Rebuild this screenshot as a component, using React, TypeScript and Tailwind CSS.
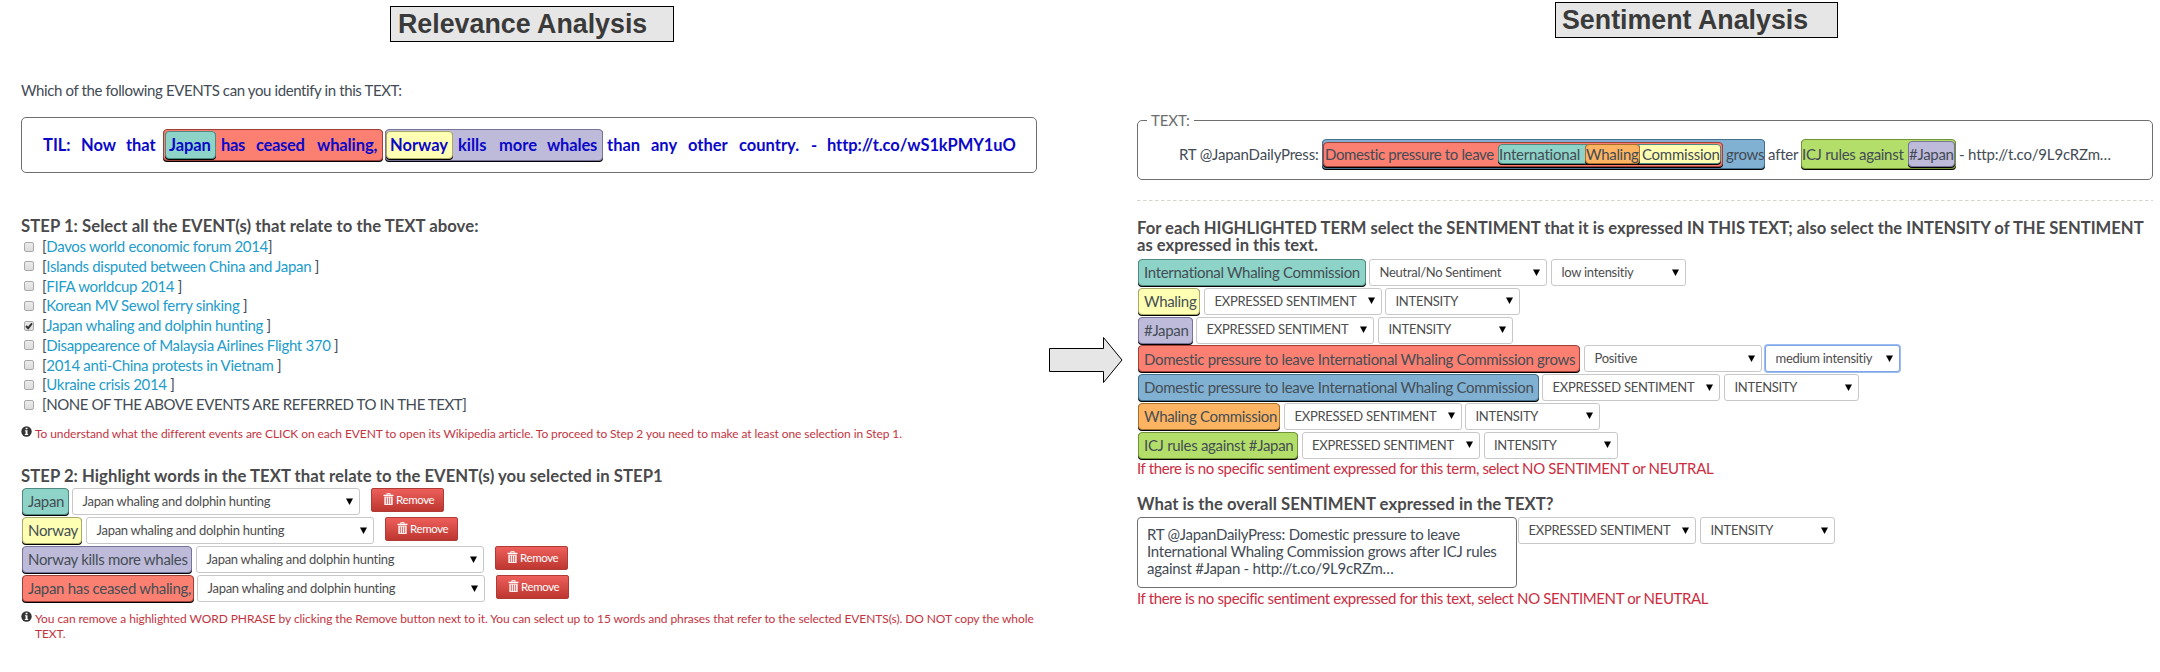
import React from "react";
import clsx from "clsx";

const BODY = "text-[15px] text-[#434b55]";
const HEAD = "font-bold text-[#4a4a4c] whitespace-nowrap";

const TONES = {
  teal: "bg-[#8dd3c7] border-[#4f8a80]",
  yellow: "bg-[#ffffb3] border-[#a9a96a]",
  purple: "bg-[#bebada] border-[#77749a]",
  red: "bg-[#fb8072] border-[#9c4038]",
  blue: "bg-[#80b1d3] border-[#45718f]",
  orange: "bg-[#fdb462] border-[#a66f2b]",
  green: "bg-[#b3de69] border-[#719438]",
};
type Tone = keyof typeof TONES;

function Mark({ tone, className, children }: { tone: Tone; className: string; children: React.ReactNode }) {
  return (
    <span className={clsx("flex shrink-0 items-center whitespace-pre rounded-[4px] border shadow-[0_1px_0_#000]", TONES[tone], className)}>
      {children}
    </span>
  );
}

function Pill({ tone, text, width }: { tone: Tone; text: string; width: string }) {
  return (
    <Mark tone={tone} className={clsx("h-[27px] pl-[5px] text-[15px] text-[#454e55] tracking-[-0.31px]", width)}>
      {text}
    </Mark>
  );
}

function Select({ text, width, focused }: { text: string; width: string; focused?: boolean }) {
  return (
    <span
      className={clsx(
        "flex h-[27px] shrink-0 items-center justify-between whitespace-nowrap rounded-[3px] border bg-white pl-[9.5px] pr-[6px] text-[13px] tracking-[-0.28px] text-[#4d4d4d]",
        focused ? "-ml-px border-[#7ea6e6] ring-1 ring-[#9dbcf0]" : "border-[#c8c8c8]",
        width
      )}
    >
      {text}
      <svg width="7" height="7" viewBox="0 0 7 7" className="-mt-px">
        <path d="M0 0.5H7L3.5 7Z" fill="#000" />
      </svg>
    </span>
  );
}

function InfoIcon() {
  return (
    <svg width="11" height="11" viewBox="0 0 11 11" className="shrink-0">
      <circle cx="5.5" cy="5.5" r="5.2" fill="#333" />
      <path d="M4.6 1.7h1.9v1.5H4.6zM3.9 4.3h2.6v3.6h.7v1H3.8v-1h.8V5.3h-.7z" fill="#fff" />
    </svg>
  );
}

function RemoveButton() {
  return (
    <span className="flex h-[24px] w-[73px] shrink-0 items-center rounded-[2px] border border-[#b03a35] bg-linear-to-b from-[#ee5f5b] to-[#bd362f] pl-[11px] text-[11.5px] tracking-[-0.38px] text-white">
      <svg width="11" height="12" viewBox="0 0 11 12" className="-mt-[2px] mr-[2px]">
        <path d="M3.8 2V0.7H7.2V2" fill="none" stroke="#fff" strokeWidth="1" />
        <path d="M0.5 2.4H10.5" stroke="#fff" strokeWidth="1.3" />
        <path d="M1.3 3.6H9.7V12H1.3Z" fill="#fff" fillOpacity="0.9" />
        <path d="M3.4 4.6V11M5.5 4.6V11M7.6 4.6V11" stroke="#d9534f" strokeWidth="0.8" />
      </svg>
      Remove
    </span>
  );
}

function Title({ text, className }: { text: string; className: string }) {
  return (
    <div
      className={clsx(
        "flex h-[36px] shrink-0 items-center whitespace-nowrap border border-black bg-[#e6e6e6] font-['Liberation_Sans',sans-serif] text-[26.8px] font-bold leading-[34px] text-[#3a3a3a]",
        className
      )}
    >
      {text}
    </div>
  );
}

const EVENTS: { name: string; end: string; checked?: boolean; plain?: boolean }[] = [
  { name: "Davos world economic forum 2014", end: "]" },
  { name: "Islands disputed between China and Japan", end: " ]" },
  { name: "FIFA worldcup 2014", end: " ]" },
  { name: "Korean MV Sewol ferry sinking", end: " ]" },
  { name: "Japan whaling and dolphin hunting", end: " ]", checked: true },
  { name: "Disappearence of Malaysia Airlines Flight 370", end: " ]" },
  { name: "2014 anti-China protests in Vietnam", end: " ]" },
  { name: "Ukraine crisis 2014", end: " ]" },
  { name: "NONE OF THE ABOVE EVENTS ARE REFERRED TO IN THE TEXT", end: "]", plain: true },
];

const PHRASES: { text: string; tone: Tone; slot: string; width: string }[] = [
  { text: "Japan", tone: "teal", slot: "w-[50px]", width: "w-[47px]" },
  { text: "Norway", tone: "yellow", slot: "w-[64px]", width: "w-[60px]" },
  { text: "Norway kills more whales", tone: "purple", slot: "w-[174px]", width: "w-[170px]" },
  { text: "Japan has ceased whaling,", tone: "red", slot: "w-[175px]", width: "w-[172px]" },
];

const TERMS: {
  text: string; tone: Tone; slot: string; width: string;
  sentiment: string; intensity: string; gap: string; focused?: boolean;
}[] = [
  { text: "International Whaling Commission", tone: "teal", slot: "w-[231px]", width: "w-[228px]", sentiment: "Neutral/No Sentiment", intensity: "low intensitiy", gap: "gap-[4px]" },
  { text: "Whaling", tone: "yellow", slot: "w-[66px]", width: "w-[62px]", sentiment: "EXPRESSED SENTIMENT", intensity: "INTENSITY", gap: "gap-[3px]" },
  { text: "#Japan", tone: "purple", slot: "w-[58px]", width: "w-[55px]", sentiment: "EXPRESSED SENTIMENT", intensity: "INTENSITY", gap: "gap-[4px]" },
  { text: "Domestic pressure to leave International Whaling Commission grows", tone: "red", slot: "w-[446px]", width: "w-[442px]", sentiment: "Positive", intensity: "medium intensitiy", gap: "gap-[4px]", focused: true },
  { text: "Domestic pressure to leave International Whaling Commission", tone: "blue", slot: "w-[404px]", width: "w-[401px]", sentiment: "EXPRESSED SENTIMENT", intensity: "INTENSITY", gap: "gap-[4px]" },
  { text: "Whaling Commission", tone: "orange", slot: "w-[146px]", width: "w-[142px]", sentiment: "EXPRESSED SENTIMENT", intensity: "INTENSITY", gap: "gap-[3px]" },
  { text: "ICJ rules against #Japan", tone: "green", slot: "w-[163.5px]", width: "w-[160px]", sentiment: "EXPRESSED SENTIMENT", intensity: "INTENSITY", gap: "gap-[4px]" },
];

function Relevance() {
  return (
    <section className="flex w-[1037px] shrink-0 flex-col pl-[21px] pt-[6px]">
      <Title text="Relevance Analysis" className="ml-[369px] w-[284px] pl-[7px]" />
      <p className={clsx(BODY, "mt-[38px] h-[20px] leading-[20px] tracking-[-0.39px]")}>
        Which of the following EVENTS can you identify in this TEXT:
      </p>
      <div className="mt-[17px] flex h-[56px] items-center rounded-[5px] border border-[#6f6f6f] pl-[21px] text-[16.5px] font-bold text-[#0b08c8]">
        <span className="w-[38px]">TIL:</span>
        <span className="w-[45px]">Now</span>
        <span className="w-[37px] tracking-[-0.1px]">that</span>
        <Mark tone="red" className="h-[32px] w-[220px] pl-px">
          <Mark tone="teal" className="h-[28px] w-[51px] pl-[3px] tracking-[-0.1px]">Japan</Mark>
          <span className="ml-[5px] w-[35px] shrink-0 tracking-[-0.3px]">has</span>
          <span className="w-[61px] shrink-0 tracking-[-0.3px]">ceased</span>
          <span className="tracking-[-0.1px]">whaling,</span>
        </Mark>
        <Mark tone="purple" className="ml-[2px] h-[32px] w-[218px]">
          <Mark tone="yellow" className="h-[28px] w-[67px] pl-[3px]">Norway</Mark>
          <span className="ml-[5px] w-[41px] shrink-0">kills</span>
          <span className="w-[48px] shrink-0">more</span>
          <span className="tracking-[-0.15px]">whales</span>
        </Mark>
        <span className="ml-[4px] w-[44px]">than</span>
        <span className="w-[37px]">any</span>
        <span className="w-[51px]">other</span>
        <span className="w-[72px]">country.</span>
        <span className="w-[16px]">-</span>
        <span className="tracking-[-0.09px]">http://t.co/wS1kPMY1uO</span>
      </div>

      <h2 className={clsx(HEAD, "mt-[43px] h-[20px] text-[16.7px] leading-[20px] tracking-[0.04px]")}>
        STEP 1: Select all the EVENT(s) that relate to the TEXT above:
      </h2>
      <ul className="mt-[0.8px]">
        {EVENTS.map((e) => (
          <li key={e.name} className={clsx(BODY, "flex h-[19.75px] items-center whitespace-pre leading-[19px]")}>
            <span className="ml-[3px] mr-[8px] flex size-[10px] items-center justify-center rounded-[2px] border border-[#a9a9a9] bg-linear-to-b from-[#ececec] to-[#dcdcdc]">
              {e.checked && (
                <svg width="8" height="8" viewBox="0 0 8 8">
                  <path d="M1 4L3.1 6.2L7 1.3" fill="none" stroke="#333" strokeWidth="1.9" />
                </svg>
              )}
            </span>
            <span className={clsx(e.plain ? "tracking-[-0.42px]" : "tracking-[-0.32px]")}>
              [<span className={e.plain ? "" : "text-[#229ccb]"}>{e.name}</span>
              {e.end}
            </span>
          </li>
        ))}
      </ul>
      <div className="mt-[11px] flex h-[15px] gap-[3px] text-[12px] leading-[15px] tracking-[-0.08px] text-[#c3343f]">
        <InfoIcon />
        <p className="whitespace-nowrap">
          To understand what the different events are CLICK on each EVENT to open its Wikipedia article. To proceed to Step 2 you
          need to make at least one selection in Step 1.
        </p>
      </div>

      <h2 className={clsx(HEAD, "mt-[25px] h-[20px] text-[16.7px] leading-[20px] tracking-[0.04px]")}>
        STEP 2: Highlight words in the TEXT that relate to the EVENT(s) you selected in STEP1
      </h2>
      <div className="mt-[2.5px] pl-px">
        {PHRASES.map((p) => (
          <div key={p.text} className="flex h-[29px] items-start">
            <div className={clsx("shrink-0", p.slot)}>
              <Pill tone={p.tone} text={p.text} width={p.width} />
            </div>
            <Select text="Japan whaling and dolphin hunting" width="w-[288px] mr-[11px]" />
            <RemoveButton />
          </div>
        ))}
      </div>
      <div className="mt-[7px] flex gap-[3px] text-[12px] leading-[15px] tracking-[-0.085px] text-[#c3343f]">
        <InfoIcon />
        <p className="whitespace-nowrap">
          You can remove a highlighted WORD PHRASE by clicking the Remove button next to it. You can select up to 15 words and
          phrases that refer to the selected EVENTS(s). DO NOT copy the whole
          <br />
          TEXT.
        </p>
      </div>
    </section>
  );
}

function Sentiment() {
  return (
    <section className="flex w-[1016px] shrink-0 flex-col pt-[2px]">
      <Title text="Sentiment Analysis" className="ml-[418px] w-[283px] pl-[6px]" />
      <fieldset className="mt-[72px] h-[70px] rounded-[5px] border border-[#6f6f6f]">
        <legend className="ml-[9px] h-[20px] w-[47px] pl-[4px] text-[15px] leading-[20px] tracking-[-0.1px] text-[#6c6c6c]">TEXT:</legend>
        <div className={clsx(BODY, "mt-[9px] flex h-[30px] items-center whitespace-pre pl-[41px]")}>
          <span className="w-[143px] shrink-0 tracking-[-0.2px]">RT @JapanDailyPress:</span>
          <Mark tone="blue" className="h-[30px] w-[443px]">
            <Mark tone="red" className="h-[25px] w-[400px] pl-px tracking-[-0.36px]">
              <span className="w-[173px] shrink-0">Domestic pressure to leave</span>
              <Mark tone="teal" className="h-[20px] w-[223px]">
                <span className="w-[86px] shrink-0 tracking-[-0.2px]">International</span>
                <Mark tone="orange" className="h-[20px] w-[55px] tracking-[-0.3px]">Whaling</Mark>
                <span className="flex h-[18px] flex-1 items-center rounded-r-[3px] bg-[#ffffb3] pl-[2px] tracking-[-0.25px]">Commission</span>
              </Mark>
            </Mark>
            <span className="pl-[3px] tracking-[-0.25px]">grows</span>
          </Mark>
          <span className="w-[36px] shrink-0 pl-[3px] tracking-[-0.2px]">after</span>
          <Mark tone="green" className="h-[30px] w-[155px]">
            <span className="w-[106px] shrink-0 tracking-[-0.3px]">ICJ rules against</span>
            <Mark tone="purple" className="h-[26px] w-[47px] tracking-[-0.3px]">#Japan</Mark>
          </Mark>
          <span className="pl-[3px] tracking-[-0.18px]">- http://t.co/9L9cRZm…</span>
        </div>
      </fieldset>
      <svg width="1016" height="1" className="mt-[20px] block">
        <path d="M0 0.5H1016" stroke="#d5d5cf" strokeDasharray="3.5 2.5" />
      </svg>

      <h2 className={clsx(HEAD, "mt-[19px] h-[34px] text-[16.6px] leading-[17px] tracking-[0.01px]")}>
        For each HIGHLIGHTED TERM select the SENTIMENT that it is expressed IN THIS TEXT; also select the INTENSITY of THE SENTIMENT
        <br />
        as expressed in this text.
      </h2>
      <div className="mt-[5px] pl-px">
        {TERMS.map((t) => (
          <div key={t.text} className="flex h-[28.8px] items-start">
            <div className={clsx("shrink-0", t.slot)}>
              <Pill tone={t.tone} text={t.text} width={t.width} />
            </div>
            <div className={clsx("flex", t.gap)}>
              <Select text={t.sentiment} width="w-[178px]" />
              <Select text={t.intensity} width="w-[134.5px]" focused={t.focused} />
            </div>
          </div>
        ))}
      </div>
      <p className="h-[14px] whitespace-nowrap text-[15px] leading-[14px] tracking-[-0.37px] text-[#cb2d3f]">
        If there is no specific sentiment expressed for this term, select NO SENTIMENT or NEUTRAL
      </p>

      <h2 className={clsx(HEAD, "mt-[19px] h-[20px] text-[16.7px] leading-[20px] tracking-[0.03px]")}>
        What is the overall SENTIMENT expressed in the TEXT?
      </h2>
      <div className="mt-[3px] flex items-start">
        <p className={clsx(BODY, "mr-[1px] h-[71px] w-[380px] rounded-[4px] border border-[#6f6f6f] pl-[9px] pt-[8px] leading-[17px] tracking-[-0.27px]")}>
          RT @JapanDailyPress: Domestic pressure to leave
          <br />
          International Whaling Commission grows after ICJ rules
          <br />
          against #Japan - http://t.co/9L9cRZm…
        </p>
        <div className="mt-[0.5px] flex gap-[4px]">
          <Select text="EXPRESSED SENTIMENT" width="w-[178px]" />
          <Select text="INTENSITY" width="w-[135px]" />
        </div>
      </div>
      <p className="h-[20px] whitespace-nowrap text-[15px] leading-[20px] tracking-[-0.37px] text-[#cb2d3f]">
        If there is no specific sentiment expressed for this text, select NO SENTIMENT or NEUTRAL
      </p>
    </section>
  );
}

export default function App() {
  return (
    <main className="flex h-[672px] w-[2160px] overflow-hidden bg-white font-[Lato,sans-serif]">
      <Relevance />
      <div className="w-[100px] shrink-0 pl-[12px] pt-[336px]">
        <svg width="74" height="48" viewBox="0 0 74 48" className="block">
          <path d="M0.5 12.5H54.5V1.5L73 24L54.5 46.5V35.5H0.5Z" fill="#e6e6e6" stroke="#000" strokeWidth="1" />
        </svg>
      </div>
      <Sentiment />
    </main>
  );
}
